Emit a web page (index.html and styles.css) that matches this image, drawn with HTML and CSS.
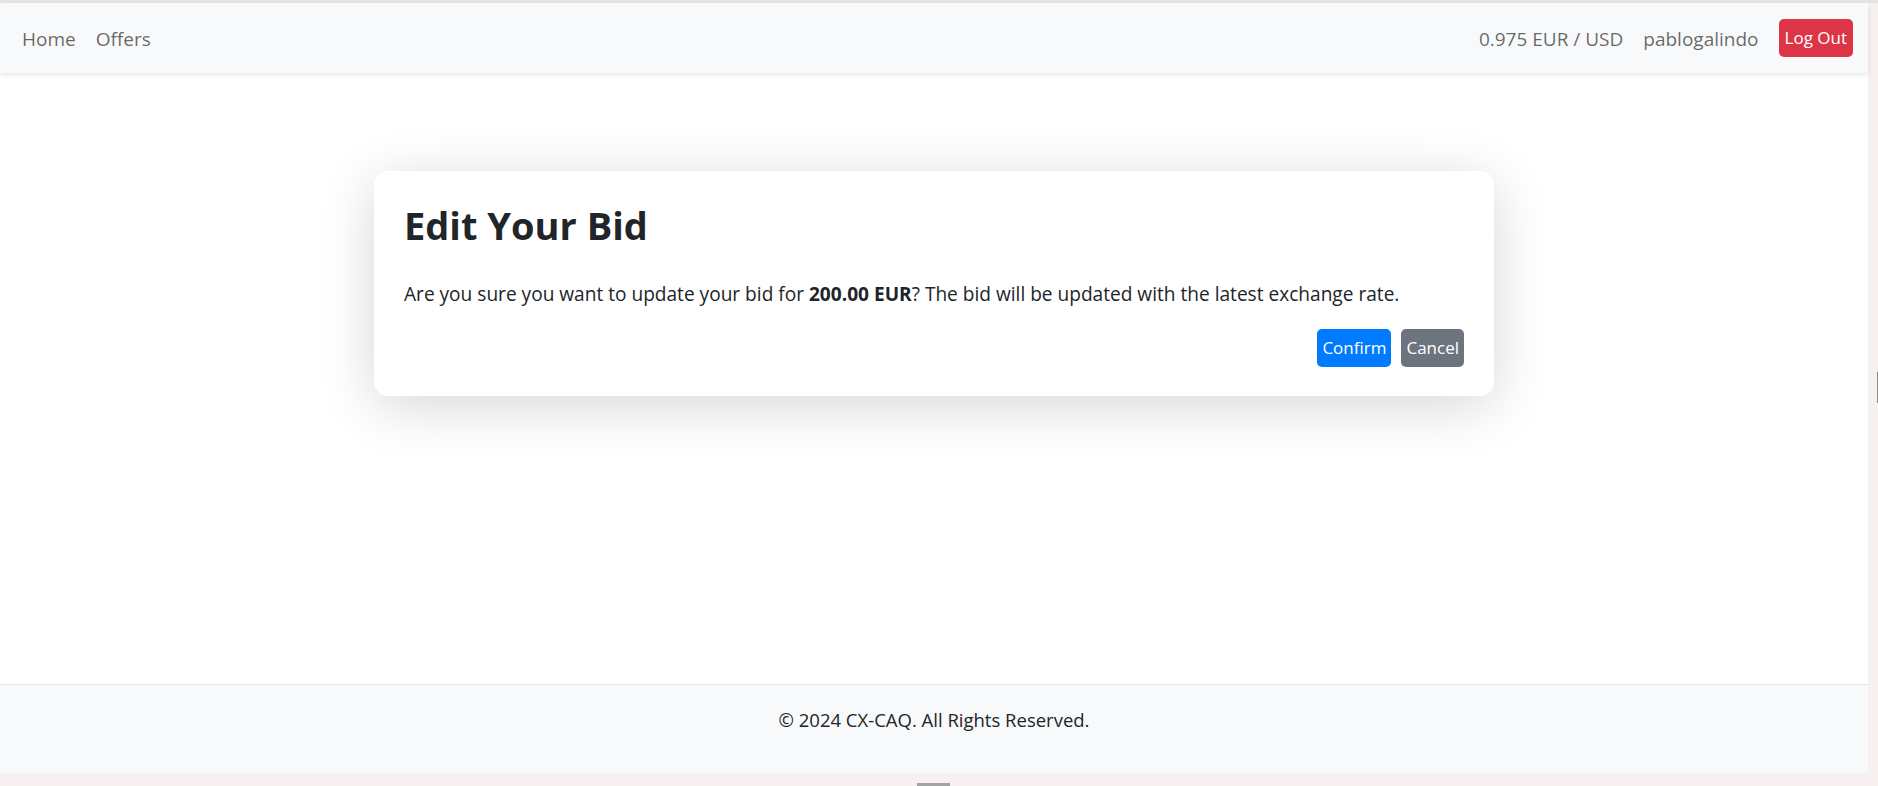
FILE: index.html
```html
<!DOCTYPE html>
<html lang="en">
<head>
<meta charset="utf-8">
<title>Edit Your Bid</title>
<link rel="stylesheet" href="styles.css">
</head>
<body>
<div class="frame">
  <div class="top-strip"></div>
  <div class="frame-row">
    <div class="page">
      <nav class="navbar">
        <div class="nav-left">
          <a class="nav-link" href="#">Home</a>
          <a class="nav-link" href="#">Offers</a>
        </div>
        <div class="nav-right">
          <span class="nav-link">0.975 EUR / USD</span>
          <span class="nav-link">pablogalindo</span>
          <button class="btn btn-danger">Log Out</button>
        </div>
      </nav>
      <main class="main">
        <div class="card">
          <h1 class="card-title">Edit Your Bid</h1>
          <p class="card-text">Are you sure you want to update your bid for <strong>200.00 EUR</strong>? The bid will be updated with the latest exchange rate.</p>
          <div class="actions">
            <button class="btn btn-primary">Confirm</button>
            <button class="btn btn-secondary">Cancel</button>
          </div>
        </div>
      </main>
      <footer class="footer">© 2024 CX-CAQ. All Rights Reserved.</footer>
    </div>
    <div class="side-strip"><div class="side-thumb"></div></div>
  </div>
  <div class="bottom-strip"><div class="bottom-handle"></div></div>
</div>
</body>
</html>
```

FILE: styles.css
```css
* { box-sizing: border-box; }
html, body { margin: 0; padding: 0; }
body {
  font-family: "Open Sans", "Noto Sans", sans-serif;
  color: #212529;
  background: #f6f0f0;
}
.frame {
  width: 1878px;
  height: 786px;
  display: flex;
  flex-direction: column;
  overflow: hidden;
}
.top-strip {
  height: 3px;
  background: #e7e3df;
  flex: none;
}
.frame-row {
  flex: 1;
  display: flex;
  min-height: 0;
}
.page {
  width: 1868px;
  display: flex;
  flex-direction: column;
  background: #fff;
}
.side-strip {
  width: 10px;
  background: #f6f0f0;
  padding-top: 369px;
  display: flex;
  justify-content: flex-end;
  align-items: flex-start;
}
.side-thumb {
  width: 1px;
  height: 31px;
  background: #8a8a8a;
}
.bottom-strip {
  height: 13px;
  background: #f6f0f0;
  flex: none;
  display: flex;
  align-items: flex-end;
  padding-left: 917px;
}
.bottom-handle {
  width: 33px;
  height: 3px;
  background: #a3a3a3;
}
.navbar {
  height: 70px;
  flex: none;
  background: #f8f9fa;
  display: flex;
  align-items: center;
  justify-content: space-between;
  padding: 1px 15px 0 12px;
  box-shadow: 0 2px 5px rgba(0, 0, 0, 0.09);
  position: relative;
  z-index: 1;
}
.nav-left, .nav-right {
  display: flex;
  align-items: center;
}
.nav-link {
  font-size: 19px;
  line-height: 30px;
  padding: 0 10px;
  color: rgba(0, 0, 0, 0.6);
  text-decoration: none;
}
.nav-right .btn { margin-left: 10px; margin-top: -1px; }
.btn {
  border: 0;
  font-family: inherit;
  color: #fff;
  height: 38px;
  line-height: 38px;
  padding: 0 5px;
  border-radius: 5px;
  font-size: 17px;
  cursor: pointer;
}
.btn-danger { background: #dc3545; font-size: 17px; padding: 0 6px; }
.btn-primary { background: #007bff; }
.btn-secondary { background: #6c757d; }
.main {
  flex: 1;
  display: flex;
  justify-content: center;
  align-items: flex-start;
  padding-top: 98px;
}
.card {
  width: 1120px;
  background: #fff;
  border-radius: 14px;
  padding: 30px 30px 29px;
  box-shadow: 0 10px 55px rgba(0, 0, 0, 0.16);
}
.card-title {
  margin: 0;
  font-size: 38px;
  line-height: 48px;
  font-weight: 700;
  color: #212529;
}
.card-text {
  margin: 30px 0 20px;
  font-size: 19.1px;
  line-height: 30px;
}
.actions {
  display: flex;
  justify-content: flex-end;
  gap: 10px;
}
.footer {
  height: 89px;
  flex: none;
  background: #f8f9fa;
  border-top: 1px solid #e3e5e8;
  display: flex;
  align-items: flex-start;
  justify-content: center;
  padding-top: 21px;
  font-size: 18.5px;
  line-height: 28px;
  color: #212529;
}
```
